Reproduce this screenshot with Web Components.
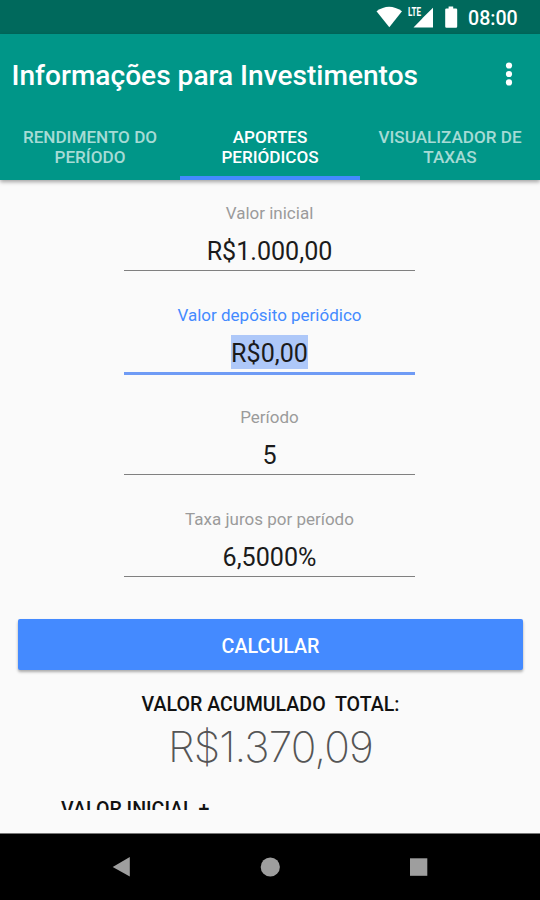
<!DOCTYPE html>
<html lang="pt-BR">
<head>
<meta charset="utf-8">
<title>Informações para Investimentos</title>
<style>
  html, body {
    margin: 0;
    height: 100%;
    overflow: hidden;
  }
  body {
    background: #fafafa;
    font-family: Roboto, "Liberation Sans", sans-serif;
  }
</style>
</head>
<body>
<investment-app></investment-app>

<script>
/**
 * Defines a custom element that renders a static template in its shadow root.
 *
 * @param {string} name - The tag name.
 * @param {string} html - The markup and styles of the shadow root.
 */
const define = (name, html) => {
  const template = document.createElement('template')
  template.innerHTML = html

  customElements.define(name, class extends HTMLElement {
    constructor () {
      super()
      this.attachShadow({ mode: 'open' })
        .appendChild(template.content.cloneNode(true))
    }
  })
}

/*
 * Android status bar.
 */
define('status-bar', `
  <style>
    :host {
      display: flex;
      flex: none;
      justify-content: flex-end;
      height: 34px;
      background: #00695c;
      color: #fff;
    }
    svg {
      width: 90px;
      height: 34px;
      margin-right: 6px;
    }
    .lte {
      font: 700 12.5px Roboto, sans-serif;
    }
    time {
      width: 72px;
      font-size: 19.6px;
      font-weight: 500;
      line-height: 37px;
    }
  </style>
  <svg viewBox="372 0 90 34" fill="#fff">
    <path d="M376.5 11.3Q389 2.2 402 11.3L389.3 27.3Z"/>
    <text class="lte" x="408" y="16.3" textLength="13" lengthAdjust="spacingAndGlyphs">LTE</text>
    <path d="M433 7.8V27.6H413.5L422.3 18.6V18.2Z"/>
    <path d="M448.6 6.6H453.2V8.4H456Q457.2 8.4 457.2 9.6V26.4Q457.2 27.7 456 27.7H446.5Q445.2 27.7 445.2 26.4V9.6Q445.2 8.4 446.5 8.4H448.6Z"/>
  </svg>
  <time>08:00</time>
`)

/*
 * Title bar with the overflow menu.
 */
define('app-bar', `
  <style>
    :host {
      display: flex;
      flex: none;
      align-items: center;
      justify-content: space-between;
      box-sizing: border-box;
      height: 80px;
      padding: 4px 24px 0 11.5px;
      color: #fff;
    }
    h1 {
      margin: 0;
      font-size: 28.1px;
      font-weight: 500;
      line-height: 34px;
      white-space: nowrap;
    }
    svg {
      width: 14px;
      height: 26px;
      margin-bottom: 5px;
    }
  </style>
  <h1><slot></slot></h1>
  <svg viewBox="0 0 14 26" fill="#fff">
    <circle cx="7" cy="4.5" r="3.1"/>
    <circle cx="7" cy="13" r="3.1"/>
    <circle cx="7" cy="21.4" r="3.1"/>
  </svg>
`)

/*
 * One tab, marked with the "selected" attribute when active.
 */
define('app-tab', `
  <style>
    :host {
      display: flex;
      flex: 1;
      align-items: center;
      justify-content: center;
      box-sizing: border-box;
      padding-top: 3px;
      border-bottom: 4px solid transparent;
      color: #a6dbd5;
      font-size: 17.1px;
      font-weight: 500;
      line-height: 20px;
      text-align: center;
      white-space: nowrap;
    }
    :host([selected]) {
      border-color: #448aff;
      color: #fff;
    }
  </style>
  <div><slot></slot></div>
`)

/*
 * Labelled text field, with the "focused" attribute for the active one.
 */
define('money-field', `
  <style>
    :host {
      display: flex;
      flex: none;
      flex-direction: column;
      align-items: center;
      box-sizing: border-box;
      width: 291px;
      height: 102px;
      margin-right: 2px;
    }
    .label {
      color: #9b9b9b;
      font-size: 17px;
      line-height: 22px;
      height: 20px;
    }
    .value {
      display: flex;
      justify-content: center;
      box-sizing: border-box;
      width: 100%;
      height: 49px;
      padding-top: 11px;
      border-bottom: 1.5px solid #808080;
      color: #1b1b1b;
      font-size: 25.1px;
      line-height: 37px;
    }
    .value span {
      height: 34px;
    }
    :host([focused]) .label {
      color: #448aff;
    }
    :host([focused]) .value {
      height: 51px;
      border-bottom: 3px solid #6f9bf5;
    }
    :host([focused]) .value span {
      background: #aec8f9;
    }
  </style>
  <div class="label"><slot name="label"></slot></div>
  <div class="value"><span><slot></slot></span></div>
`)

/*
 * Raised button.
 */
define('raised-button', `
  <style>
    :host {
      display: block;
      flex: none;
      align-self: stretch;
    }
    button {
      display: block;
      width: 100%;
      height: 51px;
      padding: 4px 0 0;
      border: 0;
      border-radius: 2px;
      background: #448aff;
      box-shadow: 0 2px 3px rgba(0, 0, 0, .32);
      color: #fff;
      font: 500 19.7px Roboto, "Liberation Sans", sans-serif;
    }
  </style>
  <button><slot></slot></button>
`)

/*
 * Accumulated total.
 */
define('total-result', `
  <style>
    :host {
      display: flex;
      flex: none;
      flex-direction: column;
      align-items: center;
    }
    .caption {
      color: #111;
      font-size: 19.6px;
      font-weight: 500;
      line-height: 24px;
      white-space: pre;
    }
    .amount {
      margin-top: 3px;
      color: #555;
      font: 200 42.5px/54px Inter, Roboto, sans-serif;
      letter-spacing: -.85px;
    }
  </style>
  <div class="caption"><slot name="caption"></slot></div>
  <div class="amount"><slot></slot></div>
`)

/*
 * Android navigation bar.
 */
define('nav-bar', `
  <style>
    :host {
      display: block;
      flex: none;
      height: 67px;
      border-top: 1px solid #777;
      box-sizing: border-box;
      background: #000;
    }
    svg {
      display: block;
      width: 540px;
      height: 66px;
    }
  </style>
  <svg viewBox="0 834 540 66" fill="#9e9e9e">
    <path d="M112.7 867L129.8 857V876.5Z"/>
    <circle cx="270.3" cy="867" r="9.6"/>
    <rect x="410" y="858.3" width="17.3" height="17.5"/>
  </svg>
`)

/*
 * The whole screen.
 */
define('investment-app', `
  <style>
    :host {
      display: flex;
      flex-direction: column;
      width: 540px;
      height: 900px;
    }
    header {
      flex: none;
      height: 146px;
      background: #009688;
      box-shadow: 0 2px 4px rgba(0, 0, 0, .35);
    }
    nav {
      display: flex;
      height: 66px;
    }
    main {
      display: flex;
      flex: none;
      flex-direction: column;
      align-items: center;
      box-sizing: border-box;
      height: 630px;
      padding: 22px 17px 0 18px;
      overflow: hidden;
    }
    raised-button {
      margin-top: 9px;
    }
    total-result {
      margin-top: 23px;
    }
    .next {
      flex: none;
      align-self: flex-start;
      margin: 24px 0 0 43px;
      color: #111;
      font-size: 19.6px;
      font-weight: 500;
      line-height: 24px;
    }
    .gap {
      flex: 1;
    }
  </style>
  <status-bar></status-bar>
  <header>
    <app-bar>Informações para Investimentos</app-bar>
    <nav>
      <app-tab>RENDIMENTO DO<br>PERÍODO</app-tab>
      <app-tab selected>APORTES<br>PERIÓDICOS</app-tab>
      <app-tab>VISUALIZADOR DE<br>TAXAS</app-tab>
    </nav>
  </header>
  <main>
    <money-field><span slot="label">Valor inicial</span>R$1.000,00</money-field>
    <money-field focused><span slot="label">Valor depósito periódico</span>R$0,00</money-field>
    <money-field><span slot="label">Período</span>5</money-field>
    <money-field><span slot="label">Taxa juros por período</span>6,5000%</money-field>
    <raised-button>CALCULAR</raised-button>
    <total-result><span slot="caption">VALOR ACUMULADO  TOTAL:</span>R$1.370,09</total-result>
    <div class="next">VALOR INICIAL +</div>
  </main>
  <div class="gap"></div>
  <nav-bar></nav-bar>
`)
</script>
</body>
</html>
